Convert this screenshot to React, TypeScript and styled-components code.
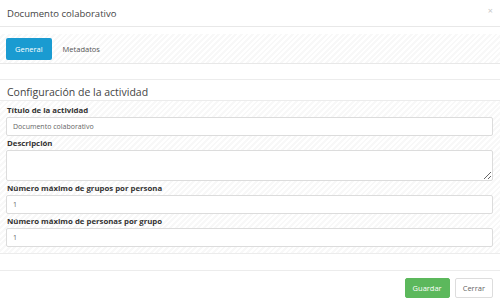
import styled, {createGlobalStyle} from "styled-components";

const GlobalStyle = createGlobalStyle`
  html, body {
    margin: 0;
    padding: 0;
    background: #fff;
  }

  body {
    font-family: "Open Sans", "Liberation Sans", sans-serif;
    color: #333;
  }
`

const stripes = `repeating-linear-gradient(
  -45deg,
  #ffffff 0px,
  #ffffff 2px,
  #f8f8f8 2px,
  #f8f8f8 4px
)`

const Modal = styled.div`
  width: 500px;
  height: 305px;
  background: #fff;
  display: flex;
  flex-direction: column;
  overflow: hidden;
`

const Header = styled.div`
  height: 27px;
  border-bottom: 1px solid #e8e8e8;
  display: flex;
  align-items: center;
  justify-content: space-between;
  padding: 0 7px;
  box-sizing: border-box;

  h4 {
    margin: 0;
    font-size: 9.5px;
    font-weight: 400;
    color: #444;
  }
`

const Close = styled.span`
  color: #c8c8c8;
  font-size: 9px;
  line-height: 1;
  margin-top: -6px;
`

const Body = styled.div`
  padding-top: 7px;
`

const TabBar = styled.div`
  height: 30px;
  box-sizing: border-box;
  background: ${stripes};
  border-bottom: 1px solid #e8e8e8;
  padding: 4px 6px 0;
  display: flex;
  gap: 2px;
`

const Tab = styled.button<{ $active?: boolean }>`
  height: 22px;
  padding: 0 9px;
  border: none;
  border-radius: 2px;
  font-family: inherit;
  font-size: 7.5px;
  background: ${p => p.$active ? "#1a9bd1" : "transparent"};
  color: ${p => p.$active ? "#fff" : "#555"};
  cursor: pointer;
`

const Section = styled.div`
  margin-top: 15px;
  border-top: 1px solid #ececec;
`

const SectionTitle = styled.h3`
  margin: 0;
  height: 20px;
  line-height: 24px;
  padding-left: 7px;
  font-size: 10.5px;
  font-weight: 400;
  color: #444;
`

const Panel = styled.div`
  background: ${stripes};
  border-top: 1px solid #ececec;
  border-bottom: 1px solid #ececec;
  padding: 2px 7px 6px 6px;
`

const Label = styled.label`
  display: block;
  height: 14px;
  line-height: 14px;
  padding-left: 1px;
  font-size: 7.8px;
  font-weight: 700;
  color: #333;
`

const Input = styled.input`
  display: block;
  width: 100%;
  height: 19px;
  box-sizing: border-box;
  border: 1px solid #dcdcdc;
  border-radius: 2px;
  background: #fff;
  padding: 0 6px;
  font-family: inherit;
  font-size: 7px;
  color: #666;
  outline: none;
`

const TextArea = styled.textarea`
  display: block;
  width: 100%;
  height: 31px;
  box-sizing: border-box;
  border: 1px solid #dcdcdc;
  border-radius: 2px;
  background: #fff;
  padding: 3px 6px;
  font-family: inherit;
  font-size: 7px;
  resize: vertical;
  outline: none;
`

const Footer = styled.div`
  margin-top: 16px;
  border-top: 1px solid #ececec;
  display: flex;
  justify-content: flex-end;
  gap: 5px;
  padding: 7px 7px 0;
`

const Button = styled.button<{ $primary?: boolean }>`
  height: 20px;
  padding: 0 7px;
  border-radius: 2px;
  font-family: inherit;
  font-size: 7.5px;
  border: 1px solid ${p => p.$primary ? "#5cb85c" : "#ddd"};
  background: ${p => p.$primary ? "#5cb85c" : "#fff"};
  color: ${p => p.$primary ? "#fff" : "#666"};
  cursor: pointer;
`

export default function App() {
    return (
        <>
            <GlobalStyle/>
            <Modal>
                <Header>
                    <h4>Documento colaborativo</h4>
                    <Close>×</Close>
                </Header>
                <Body>
                    <TabBar>
                        <Tab $active>General</Tab>
                        <Tab>Metadatos</Tab>
                    </TabBar>
                    <Section>
                        <SectionTitle>Configuración de la actividad</SectionTitle>
                        <Panel>
                            <Label>Título de la actividad</Label>
                            <Input defaultValue={"Documento colaborativo"}/>
                            <Label>Descripción</Label>
                            <TextArea/>
                            <Label>Número máximo de grupos por persona</Label>
                            <Input defaultValue={"1"}/>
                            <Label>Número máximo de personas por grupo</Label>
                            <Input defaultValue={"1"}/>
                        </Panel>
                    </Section>
                </Body>
                <Footer>
                    <Button $primary>Guardar</Button>
                    <Button>Cerrar</Button>
                </Footer>
            </Modal>
        </>
    )
}
